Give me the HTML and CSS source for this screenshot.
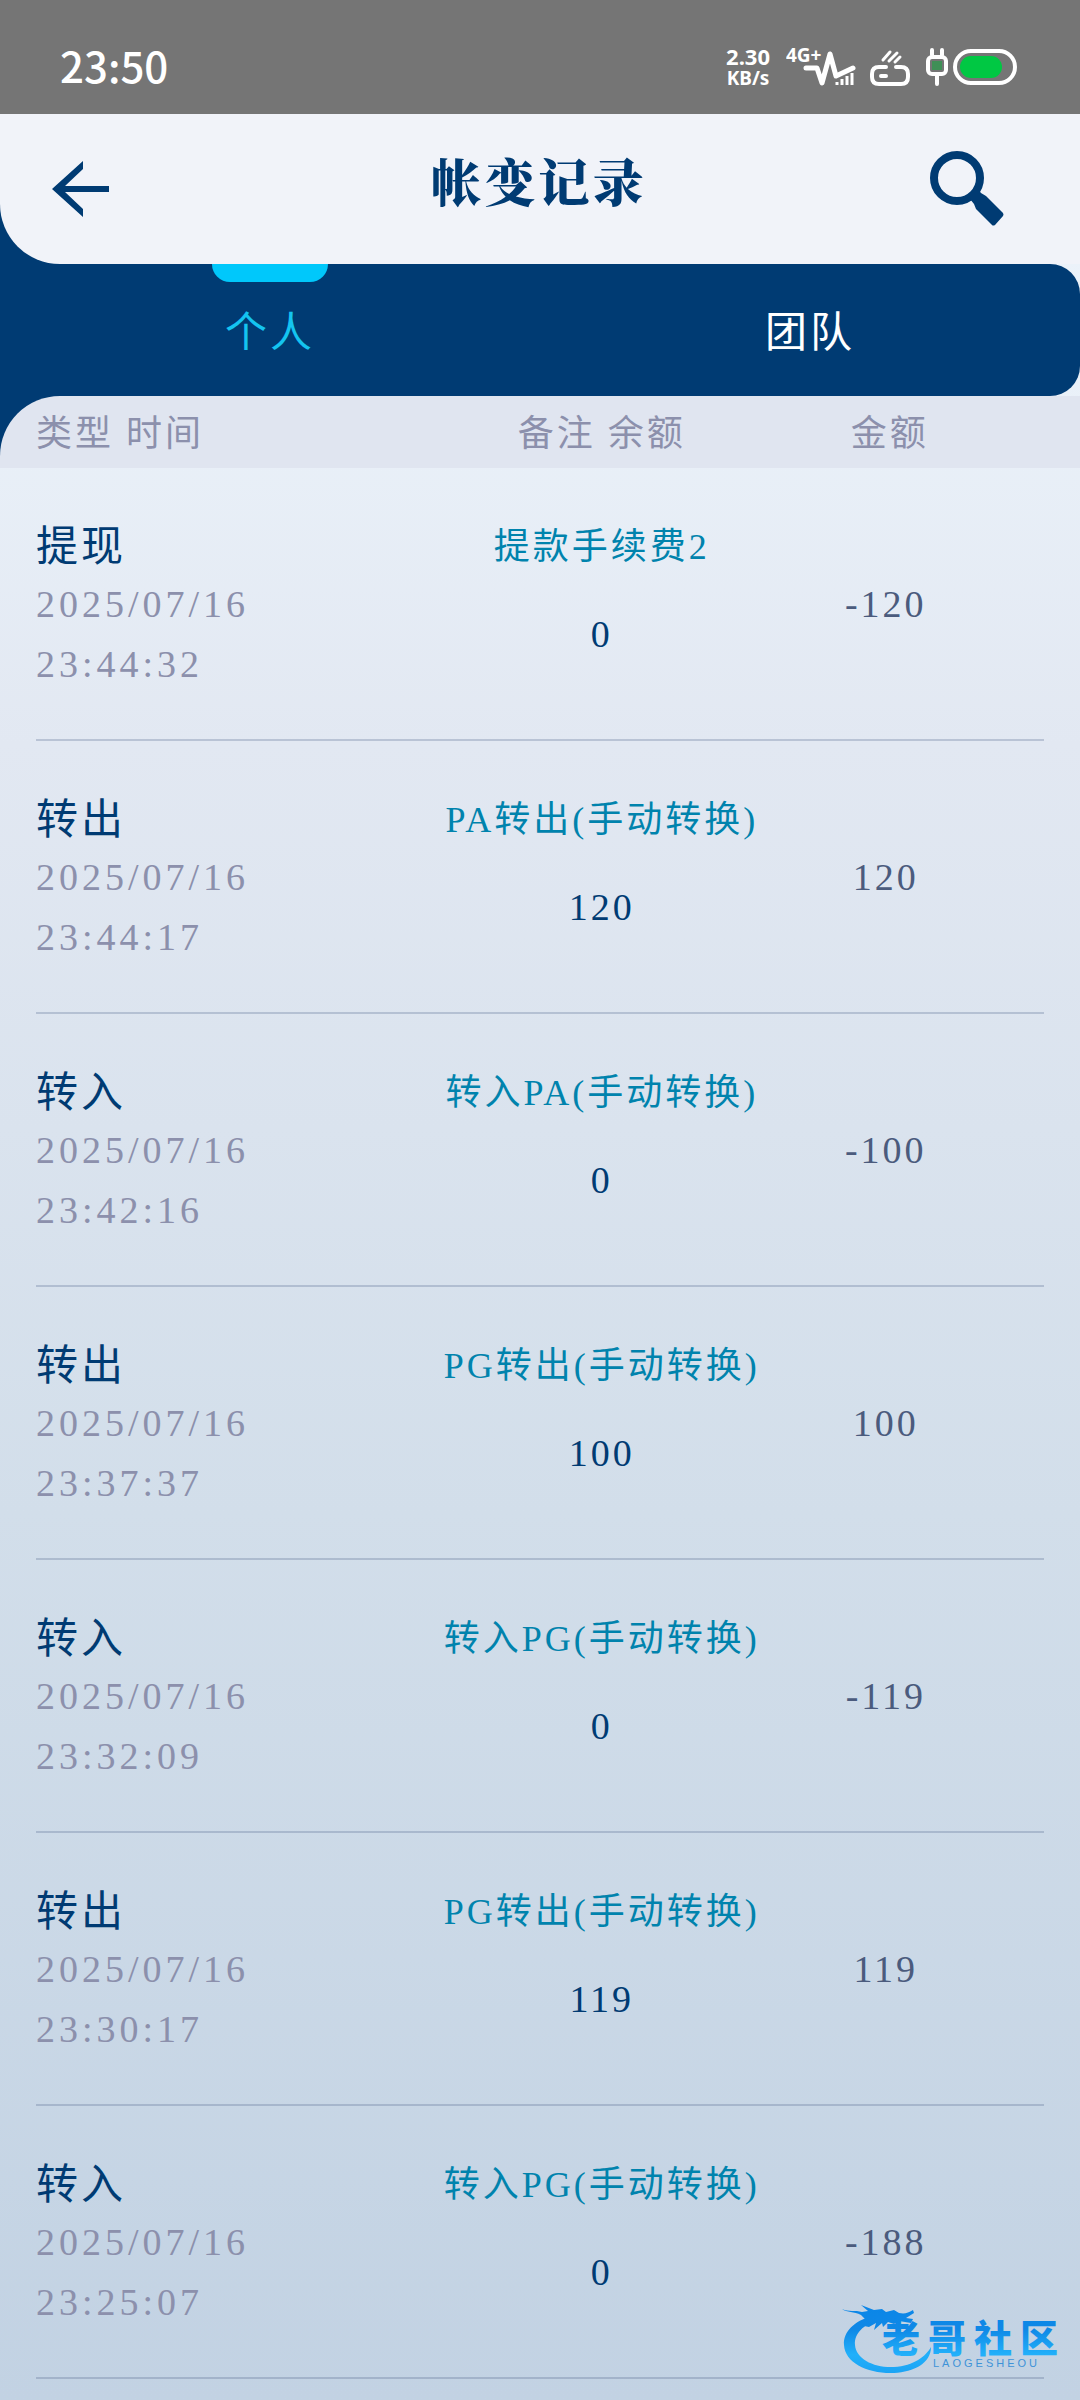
FILE: index.html
```html
<!DOCTYPE html>
<html lang="zh-CN">
<head>
  <meta charset="UTF-8" />
  <meta name="viewport" content="width=device-width, initial-scale=1.0"/>
  <title>帐变记录</title>
  <link rel="stylesheet" href="styles.css">
</head>
<body>
  <!-- Phone status bar -->
  <div class="status-bar">
    <span class="clock">23:50</span>
    <div class="status-icons">
      <div class="net-speed"><span>2.30</span><span class="unit">KB/s</span></div>
      <svg class="icon-signal" width="70" height="62" viewBox="0 -10 70 62">
        <text x="0" y="16" class="signal-text">4G+</text>
        <path d="M20 22h11l5 15 8-29 6 22 17-8" fill="none" stroke="#fff" stroke-width="5" stroke-linecap="round" stroke-linejoin="round"/>
        <path d="M51 36v3M56 33v6M61 30v9M66 27v12" stroke="#fff" stroke-width="3"/>
      </svg>
      <svg class="icon-router" width="40" height="42" viewBox="0 0 40 42">
        <path d="M16 21H9q-7 0-7 7v3q0 7 7 7h22q7 0 7-7v-3q0-7-7-7h-5M11 30h5" fill="none" stroke="#fff" stroke-width="4" stroke-linecap="round"/>
        <path d="M13 14l7-8M19 15l8-8M25 16l5-5" stroke="#fff" stroke-width="3" stroke-linecap="round"/>
      </svg>
      <svg class="icon-battery" width="94" height="42" viewBox="0 0 94 42">
        <rect x="4" y="11" width="18" height="17" rx="4" fill="none" stroke="#fff" stroke-width="4"/>
        <rect x="8" y="15" width="10" height="9" fill="#3f8f56"/>
        <path d="M8 4v5M18 4v5M13 29v9" stroke="#fff" stroke-width="4" stroke-linecap="round"/>
        <rect x="31" y="5" width="60" height="32" rx="16" fill="none" stroke="#fff" stroke-width="4"/>
        <rect x="36" y="10" width="42" height="22" rx="11" fill="#00c843"/>
      </svg>
    </div>
  </div>

  <div class="header-wrap">
    <header class="header">
      <button class="icon-btn" aria-label="返回">
        <svg width="60" height="60" viewBox="0 0 60 60">
          <path d="M32 2v8L14 27h44v6H14l18 17v8L1 30z" fill="#003b73"/>
        </svg>
      </button>
      <h1>帐变记录</h1>
      <button class="icon-btn" aria-label="搜索">
        <svg width="76" height="76" viewBox="0 0 76 76">
          <circle cx="27" cy="27" r="23" fill="none" stroke="#003b73" stroke-width="8"/>
          <path d="M48 38l3 4 5 3 17 17q1 2 0 3l-8 9q-2 1-3 0L46 58l-2-5-4-5z" fill="#003b73"/>
        </svg>
      </button>
    </header>
  </div>

  <nav class="tabs">
    <button class="tab active">个人</button>
    <button class="tab">团队</button>
  </nav>

  <!-- Records -->
  <table class="records">
    <thead>
      <tr>
        <th>类型 时间</th>
        <th>备注 余额</th>
        <th>金额</th>
      </tr>
    </thead>
    <tbody>
      <tr>
        <td><div class="type">提现</div><div class="time">2025/07/16<br>23:44:32</div></td>
        <td><div class="remark">提款手续费2</div><div class="balance">0</div></td>
        <td class="amount">-120</td>
      </tr>
      <tr>
        <td><div class="type">转出</div><div class="time">2025/07/16<br>23:44:17</div></td>
        <td><div class="remark">PA转出(手动转换)</div><div class="balance">120</div></td>
        <td class="amount">120</td>
      </tr>
      <tr>
        <td><div class="type">转入</div><div class="time">2025/07/16<br>23:42:16</div></td>
        <td><div class="remark">转入PA(手动转换)</div><div class="balance">0</div></td>
        <td class="amount">-100</td>
      </tr>
      <tr>
        <td><div class="type">转出</div><div class="time">2025/07/16<br>23:37:37</div></td>
        <td><div class="remark">PG转出(手动转换)</div><div class="balance">100</div></td>
        <td class="amount">100</td>
      </tr>
      <tr>
        <td><div class="type">转入</div><div class="time">2025/07/16<br>23:32:09</div></td>
        <td><div class="remark">转入PG(手动转换)</div><div class="balance">0</div></td>
        <td class="amount">-119</td>
      </tr>
      <tr>
        <td><div class="type">转出</div><div class="time">2025/07/16<br>23:30:17</div></td>
        <td><div class="remark">PG转出(手动转换)</div><div class="balance">119</div></td>
        <td class="amount">119</td>
      </tr>
      <tr>
        <td><div class="type">转入</div><div class="time">2025/07/16<br>23:25:07</div></td>
        <td><div class="remark">转入PG(手动转换)</div><div class="balance">0</div></td>
        <td class="amount">-188</td>
      </tr>
    </tbody>
  </table>

  <!-- Dragon watermark -->
  <svg class="watermark" width="224" height="72" viewBox="0 0 224 72">
    <defs>
      <linearGradient id="blue" x1="0" y1="0" x2="0" y2="72" gradientUnits="userSpaceOnUse">
        <stop offset="0" stop-color="#0a86e8"/>
        <stop offset="0.35" stop-color="#0f88e6"/>
        <stop offset="0.7" stop-color="#22b0fa"/>
        <stop offset="1" stop-color="#1aa2f4"/>
      </linearGradient>
    </defs>
    <g fill="url(#blue)">
      <path d="M30 12C12 17 1 28 2 41c1 18 24 29 50 28 20-1 37-10 37-26-5 9-17 19-37 20-20 1-38-8-39-22-1-12 9-20 22-25z"/>
      <path d="M0 5c7 3 13 1 20 3l6-1-7-6 13 5 8-1 4 3 8-2 5 3c6 1 9 0 14-3l1 3-8 5 7 1-2 4-12-2-5 3-6-2-5 5-1-4-8 7 2-7-7 4-5-1 3-5-6-6C12 7 5 9 0 5z"/>
      <text x="40" y="48" class="mark-name">老哥社区</text>
    </g>
    <text x="91" y="63" class="mark-latin">LAOGESHEOU</text>
  </svg>
</body>
</html>
```

FILE: styles.css
```css
* {
  box-sizing: border-box;
}

body {
  position: relative;
  margin: 0;
  min-height: 100vh;
  font-family: "Liberation Serif", "Noto Sans CJK SC", serif;
  font-size: 36px;
  letter-spacing: 3px;
  background: linear-gradient(#eef5fc 0%, #e9f0f8 18%, #e2e8f2 31%, #d2deea 63%, #c2d2e3 100%);
}

button {
  padding: 0;
  border: none;
  background: none;
  font-family: inherit;
  letter-spacing: inherit;
  cursor: pointer;
}

svg {
  display: block;
}

.status-bar {
  display: flex;
  justify-content: space-between;
  align-items: center;
  height: 114px;
  padding: 20px 62px 0 60px;
  background-color: #757575;
  color: #fff;
  font-family: "Noto Sans", "Noto Sans CJK SC", sans-serif;
  font-weight: 700;
  letter-spacing: normal;
}

.clock {
  padding-bottom: 6px;
  font-family: "Noto Sans CJK SC", sans-serif;
  font-size: 42px;
  font-weight: 500;
}

.status-icons {
  display: flex;
  align-items: center;
  gap: 14px;
}

.net-speed {
  display: flex;
  flex-direction: column;
  align-items: center;
  margin-right: 2px;
  font-size: 22px;
  line-height: 22px;
}

.net-speed .unit {
  font-size: 19px;
}

.signal-text {
  fill: #fff;
  font-size: 19px;
}

.header-wrap,
.records thead {
  background-color: #003b73;
}

.header {
  display: grid;
  grid-template-columns: 1fr auto 1fr;
  align-items: center;
  height: 150px;
  padding: 0 74px 0 51px;
  background-color: #f1f3f9;
  border-radius: 0 0 0 60px;
}

.icon-btn {
  justify-self: start;
}

.icon-btn:last-child {
  justify-self: end;
}

h1 {
  margin: 0;
  padding: 0 0 18px 20px;
  color: #003b73;
  font-family: "Noto Serif CJK SC", "Noto Sans CJK SC", serif;
  font-size: 51px;
  font-weight: 900;
}

.tabs {
  display: flex;
  height: 132px;
  background-color: #003b73;
  border-radius: 0 30px 30px 0;
}

.tab {
  position: relative;
  flex: 1;
  padding-bottom: 4px;
  color: #fff;
  font-size: 42px;
}

.tab.active {
  color: #14c4f0;
}

.tab.active::before {
  content: "";
  position: absolute;
  top: 0;
  left: 50%;
  width: 116px;
  height: 18px;
  margin-left: -58px;
  background-color: #00c8fb;
  border-radius: 0 0 18px 18px;
}

.records,
.records thead,
.records tbody {
  display: block;
}

.records tr {
  display: grid;
  grid-template-columns: 39fr 34fr 23fr;
}

.records th,
.records td {
  padding: 0;
  text-align: center;
}

.records th:first-child,
.records td:first-child {
  text-align: left;
}

.records thead tr {
  padding: 4px 74px 0 36px;
  background-color: #e0e5f0;
  border-radius: 60px 0 0 0;
}

.records th {
  color: #8c90ac;
  font-weight: 400;
  line-height: 68px;
}

.records tbody tr {
  margin: 0 36px;
  padding: 52px 38px 45px 0;
  border-bottom: 2px solid rgba(90, 110, 145, 0.3);
}

.records td {
  line-height: 60px;
}

.records .type {
  color: #003b73;
  font-size: 42px;
  line-height: 54px;
}

.records .time {
  color: #8c90ac;
  font-size: 38px;
  letter-spacing: 4px;
}

.records .remark {
  color: #0083ad;
  line-height: 54px;
}

.records .balance {
  margin-top: 30px;
  color: #003b73;
  font-size: 38px;
}

/* lines up with the date in the first column */
.records .amount {
  padding: 54px 8px 0 0;
  color: #4b5b7d;
  font-size: 38px;
}

.watermark {
  position: absolute;
  right: 14px;
  bottom: 24px;
  letter-spacing: normal;
}

.mark-name {
  font-family: "Noto Sans CJK SC", sans-serif;
  font-size: 38px;
  font-weight: 900;
  letter-spacing: 8px;
}

.mark-latin {
  fill: #3f93d8;
  font-family: "Liberation Sans", sans-serif;
  font-size: 11px;
  letter-spacing: 3px;
}
```
